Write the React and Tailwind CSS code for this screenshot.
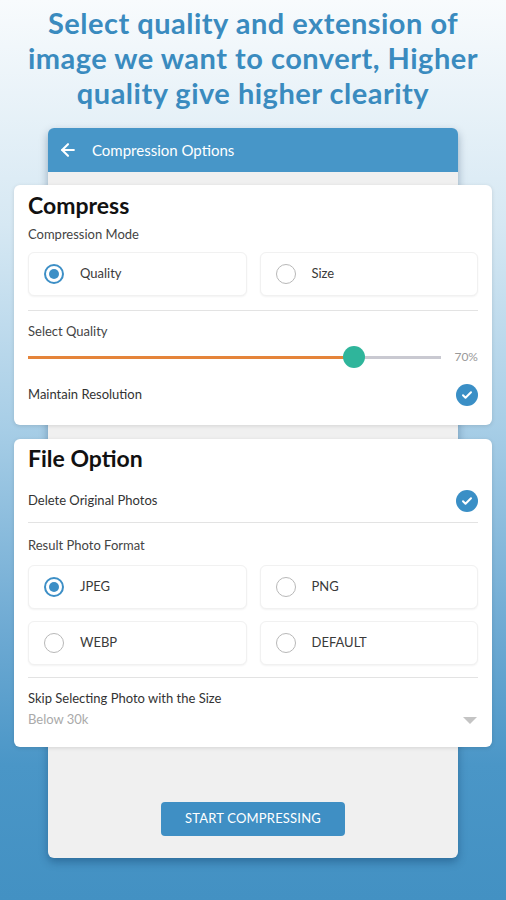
import { ArrowLeft } from 'lucide-react';

function Radio({ checked }) {
  if (checked) {
    return (
      <span className="flex h-[20px] w-[20px] shrink-0 items-center justify-center rounded-full border-2 border-[#3d8fc6]">
        <span className="h-[10px] w-[10px] rounded-full bg-[#3d8fc6]" />
      </span>
    );
  }
  return <span className="h-[20px] w-[20px] shrink-0 rounded-full border-[1.5px] border-[#b8b8b8]" />;
}

function Option({ label, checked }) {
  return (
    <div className="flex h-[44px] items-center gap-[16px] rounded-[6px] border border-[#f1f1f1] bg-white pl-[15px] shadow-[0_1px_2px_rgba(0,0,0,0.05)]">
      <Radio checked={checked} />
      <span className="text-[13px] text-[#3a3a3a]">{label}</span>
    </div>
  );
}

function Check() {
  return (
    <span className="flex h-[22px] w-[22px] items-center justify-center rounded-full bg-[#3a8fc6]">
      <svg width="12" height="12" viewBox="0 0 24 24" fill="none" stroke="white" strokeWidth="4" strokeLinecap="round" strokeLinejoin="round">
        <path d="M4 12.5l5 5L20 6.5" />
      </svg>
    </span>
  );
}

export default function App() {
  return (
    <div className="h-[900px] w-[506px] overflow-hidden bg-[linear-gradient(to_bottom,#f8fbfd_0%,#d6e8f3_25%,#a6cde6_48%,#6eaad3_70%,#4a96c7_85%,#4391c3_100%)] font-['Lato',sans-serif]">
      <h1 className="pt-[5px] text-center text-[29px] font-bold leading-[35px] tracking-[0.5px] text-[#3a8bbf]">
        Select quality and extension of
        <br />
        image we want to convert, Higher
        <br />
        quality give higher clearity
      </h1>

      {/* phone frame */}
      <div className="mx-[48px] mt-[18px] rounded-[6px] bg-[#f0f0f0] shadow-[0_4px_8px_rgba(0,40,80,0.35)]">
        <div className="flex h-[44px] items-center gap-[14px] rounded-t-[6px] bg-[#4796c8] pl-[10px] text-white">
          <ArrowLeft size={20} strokeWidth={2.5} />
          <span className="text-[15px]">Compression Options</span>
        </div>

        <div className="flex flex-col pt-[13px] pb-[22px]">
          {/* Compress card */}
          <div className="-mx-[34px] rounded-[6px] bg-white px-[14px] pt-[6px] pb-[18px] shadow-[0_1px_4px_rgba(0,0,0,0.12)]">
            <h2 className="text-[23px] font-bold leading-[28px] text-[#111]">Compress</h2>
            <p className="mt-[6px] text-[13px] leading-[18px] text-[#444]">Compression Mode</p>
            <div className="mt-[9px] grid grid-cols-2 gap-[13px]">
              <Option label="Quality" checked />
              <Option label="Size" />
            </div>
            <div className="mt-[14px] border-t border-[#e3e3e3]" />
            <p className="mt-[11px] text-[13px] leading-[18px] text-[#444]">Select Quality</p>
            <div className="mt-[5px] flex h-[24px] items-center">
              <div className="relative flex flex-1 items-center">
                <div className="h-[3px] w-[326px] bg-[#e5843a]" />
                <div className="h-[3px] flex-1 bg-[#c9c9d1]" />
                <span className="absolute left-[315px] h-[22px] w-[22px] rounded-full bg-[#2fb59b]" />
              </div>
              <span className="ml-[13px] text-[12px] text-[#999]">70%</span>
            </div>
            <div className="mt-[14px] flex h-[24px] items-center justify-between">
              <span className="text-[13px] text-[#333]">Maintain Resolution</span>
              <Check />
            </div>
          </div>

          {/* File option card */}
          <div className="-mx-[34px] mt-[14px] rounded-[6px] bg-white px-[14px] pt-[5px] pb-[18px] shadow-[0_1px_4px_rgba(0,0,0,0.12)]">
            <h2 className="text-[23px] font-bold leading-[28px] text-[#111]">File Option</h2>
            <div className="mt-[17px] flex h-[24px] items-center justify-between">
              <span className="text-[13px] text-[#333]">Delete Original Photos</span>
              <Check />
            </div>
            <div className="mt-[9px] border-t border-[#e3e3e3]" />
            <p className="mt-[13px] text-[13px] leading-[18px] text-[#444]">Result Photo Format</p>
            <div className="mt-[11px] grid grid-cols-2 gap-x-[13px] gap-y-[12px]">
              <Option label="JPEG" checked />
              <Option label="PNG" />
              <Option label="WEBP" />
              <Option label="DEFAULT" />
            </div>
            <div className="mt-[12px] border-t border-[#e3e3e3]" />
            <p className="mt-[11px] text-[13px] leading-[18px] text-[#333]">Skip Selecting Photo with the Size</p>
            <div className="mt-[4px] flex h-[18px] items-center justify-between">
              <span className="text-[13px] text-[#aaa]">Below 30k</span>
              <span className="mr-[1px] h-0 w-0 border-x-[7px] border-t-[7px] border-x-transparent border-t-[#c4c4c4]" />
            </div>
          </div>

          <button className="mx-auto mt-[55px] h-[34px] w-[184px] rounded-[4px] bg-[#3f8fc4] text-[13px] tracking-[0.2px] text-white">
            START COMPRESSING
          </button>
        </div>
      </div>
    </div>
  );
}
